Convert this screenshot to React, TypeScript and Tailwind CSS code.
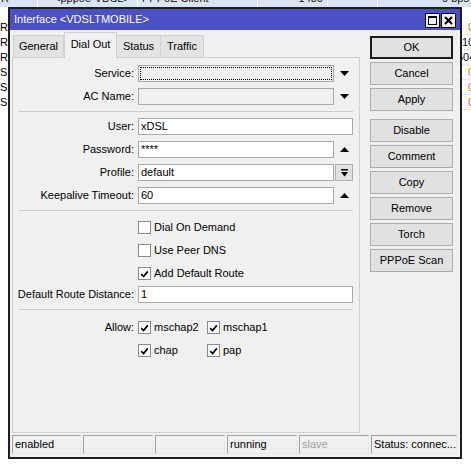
import React from "react";

const font = { fontFamily: '"Liberation Sans", Arial, sans-serif' };

function DownTri() {
  return (
    <svg width="9" height="5" viewBox="0 0 9 5">
      <polygon points="0,0 9,0 4.5,5" fill="#000" />
    </svg>
  );
}

function UpTri() {
  return (
    <svg width="9" height="5" viewBox="0 0 9 5">
      <polygon points="0,5 9,5 4.5,0" fill="#000" />
    </svg>
  );
}

function ProfileBtn() {
  return (
    <div className="ml-[1px] w-[18px] h-[17px] border border-[#adadad] bg-[#e1e1e1] flex items-center justify-center">
      <svg width="9" height="8" viewBox="0 0 9 8">
        <rect x="1" y="0" width="7" height="1.5" fill="#000" />
        <polygon points="1,3 8,3 4.5,7.5" fill="#000" />
      </svg>
    </div>
  );
}

type FieldProps = {
  label: string;
  value?: string;
  short?: boolean;
  icon?: "down" | "up" | "profile";
  variant?: "white" | "gray" | "focus";
};

function Field({ label, value = "", short, icon, variant = "white" }: FieldProps) {
  const bg = variant === "white" ? "bg-white" : "bg-[#f0f0f0]";
  return (
    <div className="flex items-center h-[17px]">
      <div className="w-[121px] text-right whitespace-nowrap">{label}</div>
      <div
        className={`ml-[4px] h-[17px] border border-[#a9a9a9] ${bg} ${
          short ? "w-[196px]" : "w-[215px]"
        } flex items-center relative`}
      >
        {variant === "focus" && (
          <div className="absolute inset-[1px] border border-dotted border-black" />
        )}
        <span className="pl-[2px] leading-none">{value}</span>
      </div>
      {icon === "down" && (
        <div className="w-[21px] flex justify-center">
          <DownTri />
        </div>
      )}
      {icon === "up" && (
        <div className="w-[21px] flex justify-center">
          <UpTri />
        </div>
      )}
      {icon === "profile" && <ProfileBtn />}
    </div>
  );
}

function Check({ checked }: { checked?: boolean }) {
  return (
    <div className="w-[13px] h-[13px] border border-[#8a8a8a] bg-white flex items-center justify-center shrink-0">
      {checked && (
        <svg width="9" height="8" viewBox="0 0 9 8">
          <path d="M1.2 4.2 L3.6 6.6 L7.8 1.4" stroke="#000" strokeWidth="1.7" fill="none" />
        </svg>
      )}
    </div>
  );
}

function CheckRow({ label, checked }: { label: string; checked?: boolean }) {
  return (
    <div className="flex items-center h-[17px]">
      <div className="w-[121px]" />
      <div className="ml-[4px] flex items-center gap-[3px]">
        <Check checked={checked} />
        <span>{label}</span>
      </div>
    </div>
  );
}

function Sep({ className = "" }: { className?: string }) {
  return <div className={`ml-[6px] w-[334px] h-px bg-[#cacaca] ${className}`} />;
}

function Btn({ children, def, className = "" }: { children: React.ReactNode; def?: boolean; className?: string }) {
  return (
    <div
      className={`w-[83px] h-[23px] flex items-center justify-center bg-[#e1e1e1] ${
        def ? "border-2 border-[#1a1a1a]" : "border border-[#adadad]"
      } ${className}`}
    >
      {children}
    </div>
  );
}

function StatusCell({ w, children, gray }: { w: string; children?: React.ReactNode; gray?: boolean }) {
  return (
    <div
      className={`${w} h-[19px] border border-t-[#a0a0a0] border-l-[#a0a0a0] border-b-[#e8e8e8] border-r-[#e8e8e8] flex items-center pl-[2px] whitespace-nowrap overflow-hidden ${
        gray ? "text-[#a0a0a0]" : "text-black"
      }`}
    >
      {children}
    </div>
  );
}

function BgRow({ left, right, rightColor, rightPad }: { left: string; right: string; rightColor: string; rightPad: string }) {
  return (
    <div className="flex h-[15px] items-center">
      <div className="w-[456px]">{left}</div>
      <div
        className={`flex-1 h-[15px] flex items-center border-b border-[#e6e6e6] ${rightPad} overflow-hidden whitespace-nowrap`}
        style={{ color: rightColor }}
      >
        {right}
      </div>
    </div>
  );
}

export default function App() {
  return (
    <div className="relative w-[471px] h-[466px] overflow-hidden bg-white text-[11px] text-black" style={font}>
      {/* background list behind the window */}
      <div className="-mt-[11px] flex flex-col">
        <div className="h-[18px] flex bg-[#d9e5f4] text-[#111] items-center whitespace-nowrap overflow-hidden">
          <div className="w-[38px] border-r border-white h-full flex items-center pl-[1px]">R</div>
          <div className="w-[100px] border-r border-white h-full flex items-center pl-[16px]">&lt;pppoe-VDSL&gt;</div>
          <div className="w-[120px] border-r border-white h-full flex items-center pl-[4px]">PPPoE Client</div>
          <div className="w-[70px] border-r border-white h-full flex items-center justify-end pr-[4px]">1480</div>
          <div className="w-[50px] border-r border-white h-full" />
          <div className="flex-1 h-full flex items-center justify-end pr-[2px]">0 bps</div>
        </div>
        <div className="h-[13px]" />
        <BgRow left="R" right="0" rightColor="#e07800" rightPad="pl-[12px]" />
        <BgRow left="R" right="10" rightColor="#111" rightPad="pl-[6px]" />
        <BgRow left="R" right="504" rightColor="#111" rightPad="pl-[1px]" />
        <BgRow left="S" right="0" rightColor="#e07800" rightPad="pl-[12px]" />
        <BgRow left="S" right="0" rightColor="#e07800" rightPad="pl-[12px]" />
        <BgRow left="S" right="0" rightColor="#e07800" rightPad="pl-[12px]" />
      </div>

      {/* window */}
      <div className="absolute left-[8px] top-[7px] w-[454px] h-[452px] border-2 border-[#1e1e1e] bg-[#f0f0f0] flex flex-col">
        {/* title bar */}
        <div className="h-[21px] bg-[#4b50c6] flex items-start shrink-0">
          <div className="pl-[4px] h-[21px] flex items-center text-white">Interface &lt;VDSLTMOBILE&gt;</div>
          <div className="ml-auto mr-[4px] mt-[4px] flex gap-[1px]">
            <div className="w-[15px] h-[15px] bg-[#f0f0f0] border border-black flex items-center justify-center">
              <svg width="9" height="9" viewBox="0 0 9 9">
                <rect x="0.5" y="0.5" width="8" height="8" fill="none" stroke="#000" strokeWidth="1" />
                <rect x="0" y="0" width="9" height="2" fill="#000" />
              </svg>
            </div>
            <div className="w-[15px] h-[15px] bg-[#f0f0f0] border border-black flex items-center justify-center">
              <svg width="9" height="9" viewBox="0 0 9 9">
                <path d="M1 1 L8 8 M8 1 L1 8" stroke="#000" strokeWidth="2" />
              </svg>
            </div>
          </div>
        </div>

        {/* main area */}
        <div className="flex pl-[2px] pt-[2px]">
          <div className="flex flex-col w-[348px]">
            {/* tabs */}
            <div className="flex items-end h-[25px] pl-[1px] relative z-10">
              <div className="w-[51px] h-[22px] bg-[#e3e3e3] border border-b-0 border-[#d0d0d0] flex items-center justify-center">General</div>
              <div className="w-[53px] h-[26px] -mb-[1px] bg-[#f0f0f0] border border-b-0 border-[#d0d0d0] flex items-center justify-center pb-[2px]">Dial Out</div>
              <div className="w-[44px] h-[22px] bg-[#e3e3e3] border border-b-0 border-l-0 border-[#d0d0d0] flex items-center justify-center">Status</div>
              <div className="w-[43px] h-[22px] bg-[#e3e3e3] border border-b-0 border-l-0 border-[#d0d0d0] flex items-center justify-center">Traffic</div>
            </div>
            {/* panel */}
            <div className="h-[376px] border border-[#d0d0d0] flex flex-col pt-[7px]">
              <Field label="Service:" short icon="down" variant="focus" />
              <div className="mt-[6px]">
                <Field label="AC Name:" short icon="down" variant="gray" />
              </div>
              <Sep className="mt-[6px]" />
              <div className="mt-[6px]">
                <Field label="User:" value="xDSL" />
              </div>
              <div className="mt-[6px]">
                <Field label="Password:" value="****" short icon="up" />
              </div>
              <div className="mt-[6px]">
                <Field label="Profile:" value="default" short icon="profile" />
              </div>
              <div className="mt-[6px]">
                <Field label="Keepalive Timeout:" value="60" short icon="up" />
              </div>
              <Sep className="mt-[6px]" />
              <div className="mt-[8px]">
                <CheckRow label="Dial On Demand" />
              </div>
              <div className="mt-[6px]">
                <CheckRow label="Use Peer DNS" />
              </div>
              <div className="mt-[6px]">
                <CheckRow label="Add Default Route" checked />
              </div>
              <div className="mt-[4px]">
                <Field label="Default Route Distance:" value="1" />
              </div>
              <Sep className="mt-[6px]" />
              <div className="mt-[9px] flex items-center h-[17px]">
                <div className="w-[121px] text-right">Allow:</div>
                <div className="ml-[4px] w-[69px] flex items-center gap-[3px]">
                  <Check checked />
                  <span>mschap2</span>
                </div>
                <div className="flex items-center gap-[3px]">
                  <Check checked />
                  <span>mschap1</span>
                </div>
              </div>
              <div className="mt-[6px] flex items-center h-[17px]">
                <div className="w-[121px]" />
                <div className="ml-[4px] w-[69px] flex items-center gap-[3px]">
                  <Check checked />
                  <span>chap</span>
                </div>
                <div className="flex items-center gap-[3px]">
                  <Check checked />
                  <span>pap</span>
                </div>
              </div>
            </div>
          </div>

          {/* buttons */}
          <div className="ml-[10px] mt-[4px] flex flex-col gap-[3px]">
            <Btn def>OK</Btn>
            <Btn>Cancel</Btn>
            <Btn>Apply</Btn>
            <Btn className="mt-[5px]">Disable</Btn>
            <Btn>Comment</Btn>
            <Btn>Copy</Btn>
            <Btn>Remove</Btn>
            <Btn>Torch</Btn>
            <Btn>PPPoE Scan</Btn>
          </div>
        </div>

        {/* status bar */}
        <div className="mt-[2px] pl-[2px] flex gap-[2px]">
          <StatusCell w="w-[69px]">enabled</StatusCell>
          <StatusCell w="w-[70px]" />
          <StatusCell w="w-[70px]" />
          <StatusCell w="w-[70px]">running</StatusCell>
          <StatusCell w="w-[70px]" gray>slave</StatusCell>
          <StatusCell w="w-[86px]">Status: connec...</StatusCell>
        </div>
      </div>
    </div>
  );
}
